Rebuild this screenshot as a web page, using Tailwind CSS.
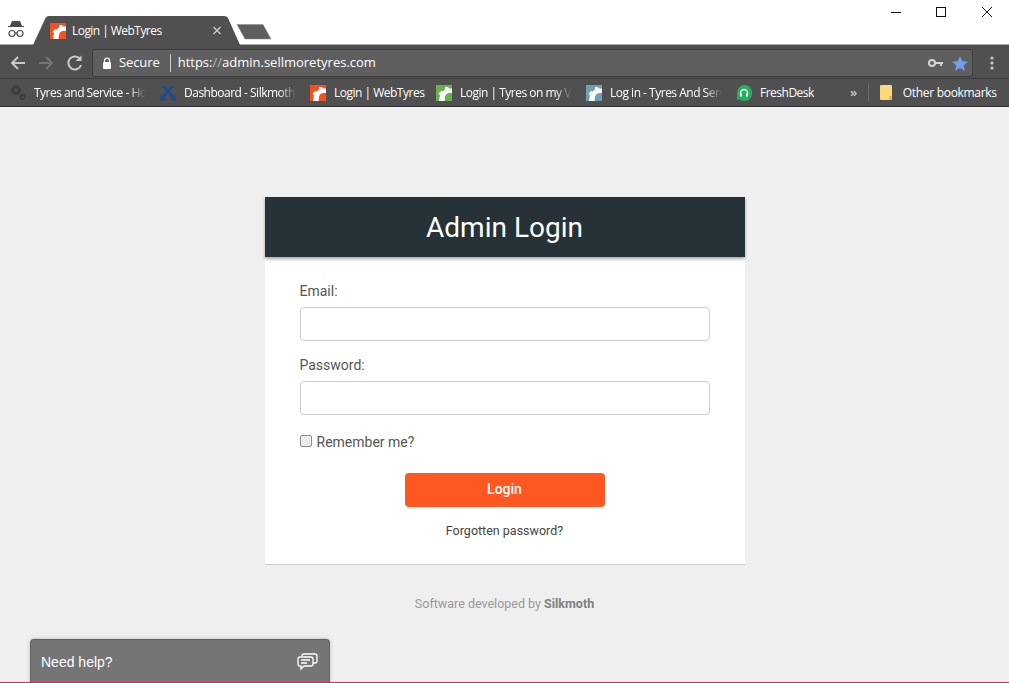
<!DOCTYPE html>
<html lang="en">
<head>
    <meta charset="UTF-8">
    <meta name="viewport" content="width=device-width, initial-scale=1.0">
    <title>Login | WebTyres</title>
    <script src="https://cdn.jsdelivr.net/npm/@tailwindcss/browser@4"></script>
</head>
<body class="relative h-[683px] w-[1009px] overflow-hidden bg-[#efefef] font-['Roboto',sans-serif]">
    <!-- browser chrome -->
    <header class="font-['Open_Sans',sans-serif] text-white">
        <div class="relative h-[44px] bg-white">
            <svg class="absolute left-0 top-0" width="290" height="46" viewBox="0 0 290 46">
                <path d="M33 45 L45.500 18 Q46.500 16 49 16 H224 Q227 16 228 18 L240 45 Z" fill="#505050"/>
                <path d="M237 24.500 H263 L271 39 H245 Z" fill="#5e5e5e" stroke="#8c8c8c" stroke-width="0.500"/>
                <path d="M10 26 L12 21 H20 L22 26 H24 V27 H8 V26 Z" fill="#4a4a4a"/>
                <circle cx="12" cy="33.500" r="3" fill="none" stroke="#4a4a4a" stroke-width="1.200"/>
                <circle cx="20" cy="33.500" r="3" fill="none" stroke="#4a4a4a" stroke-width="1.200"/>
                <path d="M15 33 H17" stroke="#4a4a4a" stroke-width="1.200"/>
                <rect x="50" y="23" width="16" height="16" fill="#f4511e"/>
                <path d="M53 39 L54 33 L52.500 32 L55 29 L56.500 29.500 L59 27.500 L59 25 L62 25 L63 26.500 L66 26.500 V31 L63 31 Q59.500 31.500 59 35 L58.500 39 Z" fill="#fff"/>
                <path d="M213.500 27 L220.500 34 M220.500 27 L213.500 34" stroke="#c4c4c4" stroke-width="1.600"/>
            </svg>
            <span class="absolute left-[72px] top-[22px] text-[12px] leading-[18px] tracking-[-0.55px]">Login | WebTyres</span>
            <svg class="absolute left-[890px] top-0" width="110" height="24" viewBox="0 0 110 24" fill="none" stroke="#111" stroke-width="1">
                <path d="M1 12.500 H11"/>
                <rect x="46.500" y="7.500" width="9" height="9"/>
                <path d="M92 7 L102 17 M102 7 L92 17"/>
            </svg>
        </div>
        <div class="h-[1px] bg-[#a9a9a9]"></div>
        <div class="flex h-[33px] items-center bg-[#505050] pl-[8px] pt-[3px]">
            <svg width="84" height="20" viewBox="0 0 84 20" fill="none" stroke-width="2">
                <path d="M17 10 H4 M10 4 L4 10 L10 16" stroke="#c9c9c9"/>
                <path d="M31 10 H44 M38 4 L44 10 L38 16" stroke="#757575"/>
                <path d="M72 6 A6.500 6.500 0 1 0 73 12" stroke="#c9c9c9"/>
                <path d="M67.500 8 H73.500 V2.500 Z" fill="#c9c9c9"/>
            </svg>
            <div class="flex h-[28px] w-[881px] items-center rounded-[3px] border border-[#3d3d3d] bg-[#5f5f5f]">
                <svg class="ml-[9px]" width="10" height="12" viewBox="0 0 10 12">
                    <path d="M2.500 5 V3.500 A2.500 2.500 0 0 1 7.500 3.500 V5" fill="none" stroke="#fff" stroke-width="1.200"/>
                    <rect x="1" y="5" width="8" height="7" rx="1" fill="#fff"/>
                </svg>
                <span class="ml-[7px] text-[13px] tracking-[-0.1px]">Secure</span>
                <div class="ml-[10px] h-[18px] w-px bg-[#c9c9c9]"></div>
                <span class="ml-[7px] text-[13px]">https:<span class="text-[#b5b5b5]">//</span>admin.sellmoretyres.com</span>
                <svg class="ml-auto" width="16" height="10" viewBox="0 0 16 10">
                    <circle cx="4" cy="5" r="3" fill="none" stroke="#d4d4d4" stroke-width="2"/>
                    <path d="M7 4 H15 V6 H14 V8 H12 V6 H7 Z" fill="#d4d4d4"/>
                </svg>
                <svg class="ml-[8px] mr-[4px]" width="16" height="15" viewBox="0 0 16 15">
                    <path d="M8 0 L10.200 5.200 L16 5.700 L11.600 9.400 L13 15 L8 12 L3 15 L4.400 9.400 L0 5.700 L5.800 5.200 Z" fill="#6fa0ee"/>
                </svg>
            </div>
            <svg class="ml-[17px]" width="4" height="14" viewBox="0 0 4 14" fill="#c9c9c9">
                <circle cx="2" cy="2" r="1.600"/><circle cx="2" cy="7" r="1.600"/><circle cx="2" cy="12" r="1.600"/>
            </svg>
        </div>
        <div class="flex h-[29px] items-center border-y border-t-[#3f3f3f] border-b-[#333333] bg-[#505050] text-[12px] tracking-[-0.5px]">
            <svg class="ml-[10px] shrink-0" width="16" height="17" viewBox="0 0 16 17" fill="none" stroke="#3d3d3d">
                <circle cx="6" cy="6" r="3.500" stroke-width="3"/>
                <circle cx="12.500" cy="13" r="2" stroke-width="2"/>
            </svg>
            <span class="ml-[8px] w-[112px] shrink-0 overflow-hidden whitespace-nowrap [mask-image:linear-gradient(to_right,black_85%,transparent)]">Tyres and Service - Home</span>
            <svg class="ml-[14px] shrink-0" width="16" height="16" viewBox="0 0 16 16" fill="none" stroke="#154a96" stroke-width="2.500">
                <path d="M3 1 L12 11 M13 1 L4 11"/>
                <circle cx="3" cy="13" r="1.800" stroke-width="2"/><circle cx="13" cy="13" r="1.800" stroke-width="2"/>
            </svg>
            <span class="ml-[8px] w-[112px] shrink-0 overflow-hidden whitespace-nowrap [mask-image:linear-gradient(to_right,black_85%,transparent)]">Dashboard - Silkmoth</span>
            <svg class="ml-[14px] shrink-0" width="16" height="16" viewBox="0 0 16 16">
                <rect width="16" height="16" fill="#f4511e"/>
                <path d="M3 16 L4 10 L2.500 9 L5 6 L6.500 6.500 L9 4.500 L9 2 L12 2 L13 3.500 L16 3.500 V8 L13 8 Q9.500 8.500 9 12 L8.500 16 Z" fill="#fff"/>
            </svg>
            <span class="ml-[8px] w-[100px] shrink-0 whitespace-nowrap">Login | WebTyres</span>
            <svg class="ml-[2px] shrink-0" width="16" height="16" viewBox="0 0 16 16">
                <rect width="16" height="16" fill="#6ab04c"/>
                <path d="M3 16 L4 10 L2.500 9 L5 6 L6.500 6.500 L9 4.500 L9 2 L12 2 L13 3.500 L16 3.500 V8 L13 8 Q9.500 8.500 9 12 L8.500 16 Z" fill="#fff"/>
            </svg>
            <span class="ml-[8px] w-[112px] shrink-0 overflow-hidden whitespace-nowrap [mask-image:linear-gradient(to_right,black_85%,transparent)]">Login | Tyres on my Vehicle</span>
            <svg class="ml-[14px] shrink-0" width="16" height="16" viewBox="0 0 16 16">
                <rect width="16" height="16" fill="#6d9fbb"/>
                <path d="M3 16 L4 10 L2.500 9 L5 6 L6.500 6.500 L9 4.500 L9 2 L12 2 L13 3.500 L16 3.500 V8 L13 8 Q9.500 8.500 9 12 L8.500 16 Z" fill="#fff"/>
            </svg>
            <span class="ml-[8px] w-[112px] shrink-0 overflow-hidden whitespace-nowrap [mask-image:linear-gradient(to_right,black_85%,transparent)]">Log in - Tyres And Service</span>
            <svg class="ml-[14px] shrink-0" width="16" height="16" viewBox="0 0 16 16" fill="none">
                <path d="M8 0 A8 8 0 1 1 3 14 L1 15 L1 8 A8 8 0 0 1 8 0 Z" fill="#27ae60"/>
                <path d="M4.500 10 V8 A3.500 3.500 0 0 1 11.500 8 V10" stroke="#fff" stroke-width="1.300"/>
                <rect x="4" y="8.500" width="2" height="3" fill="#fff"/><rect x="10" y="8.500" width="2" height="3" fill="#fff"/>
            </svg>
            <span class="ml-[8px] w-[80px] shrink-0 whitespace-nowrap">FreshDesk</span>
            <span class="ml-[10px] text-[13px] font-semibold text-[#c9c9c9]">»</span>
            <div class="ml-[11px] h-[18px] w-px bg-[#6a6a6a]"></div>
            <svg class="ml-[11px] shrink-0" width="12" height="15" viewBox="0 0 12 15">
                <path d="M0 1 Q0 0 1 0 H11 Q12 0 12 1 V14 Q12 15 11 15 H1 Q0 15 0 14 Z" fill="#fbd879"/>
                <rect x="9" y="11" width="3" height="4" fill="#e8b94f"/>
            </svg>
            <span class="ml-[11px] whitespace-nowrap tracking-[-0.3px]">Other bookmarks</span>
        </div>
    </header>

    <!-- login card -->
    <main class="mx-auto mt-[90px] w-[480px]">
        <div class="bg-white border-b border-[#cccccc]">
            <h1 class="h-[60px] bg-[#263238] text-center text-[28px] leading-[62px] text-white shadow-[0_2px_3px_rgba(0,0,0,0.35)]">Admin Login</h1>
            <form class="flex h-[307px] flex-col px-[35px] pt-[25px] text-[14px] text-[#555555]">
                <label class="h-[25px] leading-[18px]">Email:</label>
                <input type="text" class="h-[34px] w-full rounded-[4px] border border-[#cccccc] bg-white">
                <label class="mt-[15px] h-[25px] leading-[18px]">Password:</label>
                <input type="password" class="h-[34px] w-full rounded-[4px] border border-[#cccccc] bg-white">
                <div class="mt-[18px] flex h-[18px] items-center">
                    <input type="checkbox" class="mb-[3px] h-[12px] w-[12px] appearance-none rounded-[2px] border border-[#8f8f8f] bg-[#ececec]">
                    <label class="ml-[5px] leading-[18px]">Remember me?</label>
                </div>
                <button type="button" class="mx-auto mt-[22px] h-[34px] w-[200px] rounded-[4px] bg-[#ff5722] pb-[2px] text-[14px] font-medium text-white">Login</button>
                <a class="mt-[15px] text-center text-[12.500px] leading-[18px] text-[#444444]">Forgotten password?</a>
            </form>
        </div>
        <p class="mt-[30px] text-center text-[12.500px] leading-[18px] text-[#999999]">Software developed by <b class="font-bold text-[#808080]">Silkmoth</b></p>
    </main>

    <!-- help widget, sits over the page -->
    <div class="absolute bottom-0 left-[30px] flex h-[44px] w-[300px] items-center justify-between rounded-t-[4px] border border-b-0 border-[#626262] bg-[#757575] pl-[10px] pr-[11px] pt-[1px] font-['Liberation_Sans',sans-serif] text-[14px] text-white shadow-[0_0_4px_rgba(0,0,0,0.2)]">
        <span>Need help?</span>
        <svg width="21" height="18" viewBox="0 0 21 18" fill="none" stroke="#fff" stroke-width="1.300">
            <path d="M3 4 H14 Q16 4 16 6 V11 Q16 13 14 13 H7 L4 16 V13 H3 Q1 13 1 11 V6 Q1 4 3 4 Z"/>
            <path d="M5 3 Q5 1 7 1 H18 Q20 1 20 3 V8 Q20 10 18 10 H16"/>
            <path d="M4 7 H13 M4 10 H10"/>
        </svg>
    </div>
    <div class="absolute bottom-0 left-0 h-[1px] w-full bg-[#e91e78]"></div>
</body>
</html>
